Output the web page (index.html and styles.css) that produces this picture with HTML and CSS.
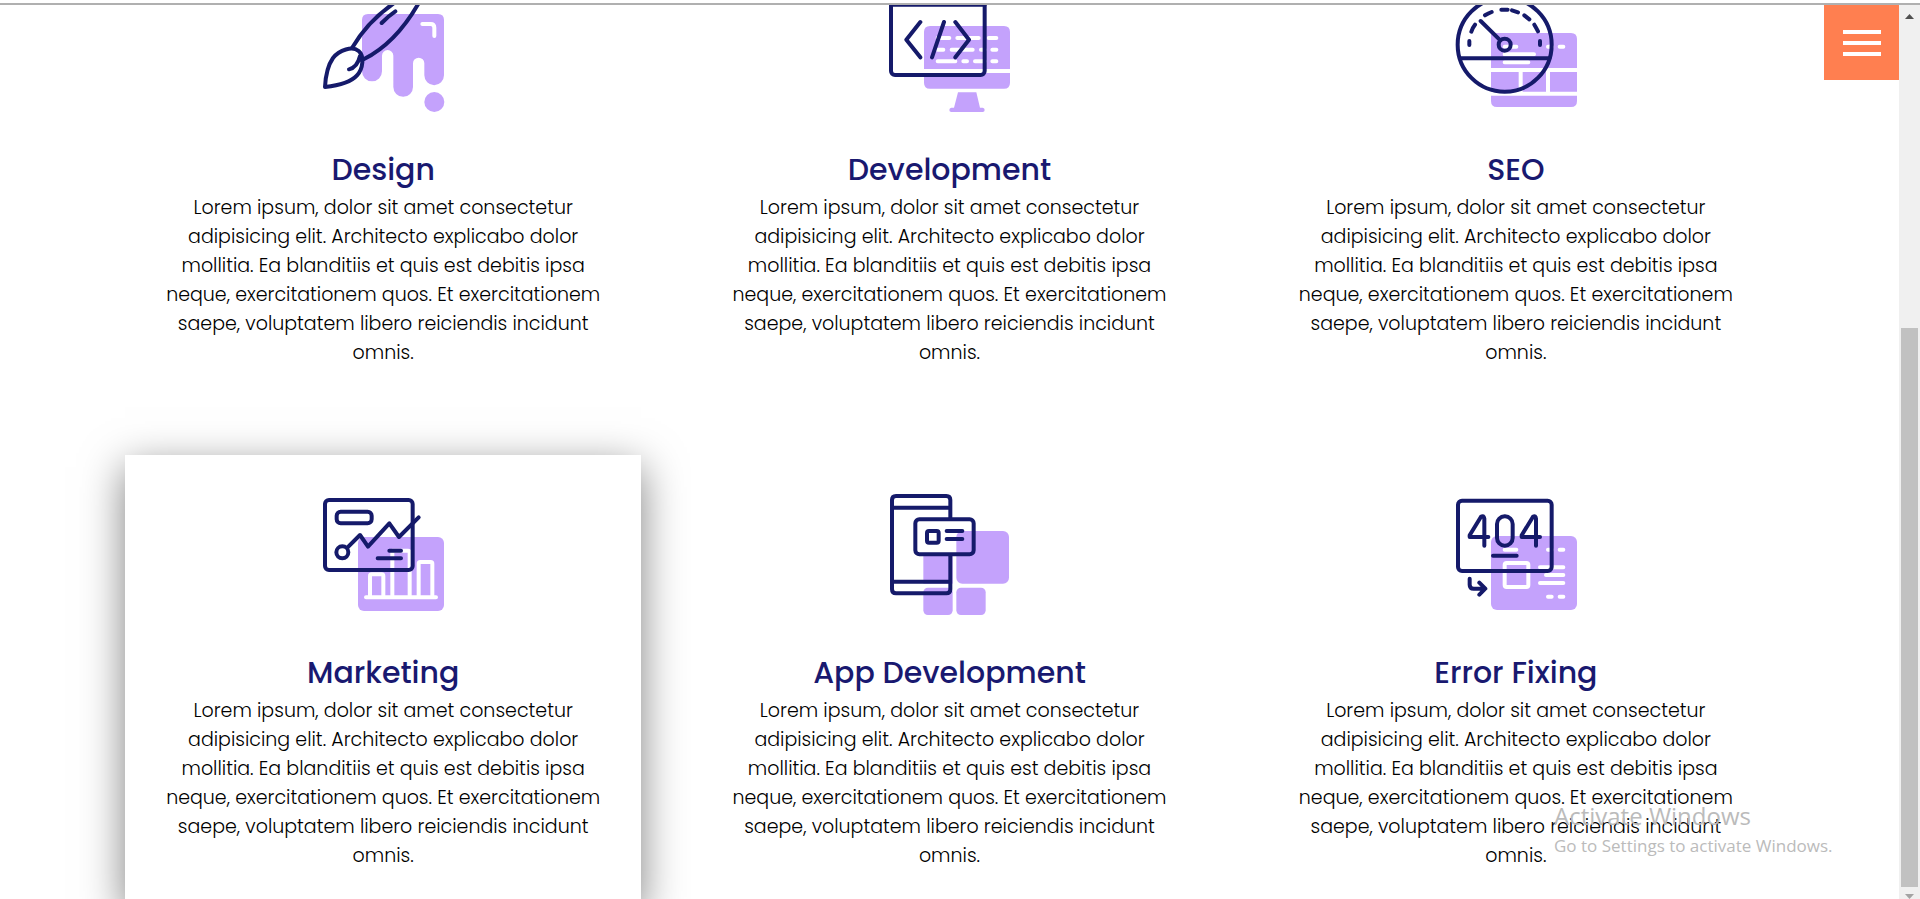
FILE: index.html
```html
<!DOCTYPE html>
<html lang="en">
<head>
<meta charset="utf-8">
<title>Services</title>
<link rel="stylesheet" href="styles.css">
</head>
<body>
<div class="window">
  <div class="page">
    <main class="services">
      <article class="card">
        <svg class="icon" viewBox="54 -39 390 390" aria-hidden="true">
          <path class="fill" d="M204 42H414Q432 42 432 60V226A29 29 0 0 1 373 226V190A17 17 0 0 0 339 190V261A29 29 0 0 1 280 261V167A17 17 0 0 0 246 167V214A30 30 0 0 1 186 214V60Q186 42 204 42Z"/>
          <circle class="fill" cx="403" cy="306" r="30"/>
          <path class="white" d="M367 72H392Q403 72 403 83V108"/>
          <path class="line" d="M156 144Q205 60 290 4M359 4Q290 128 191 178M245 69Q265 48 286 34"/>
          <path class="line" d="M75 261Q78 204 99 174C118 150 157 137 176 153C193 167 190 205 171 226C153 246 119 256 75 261ZM147 208Q172 202 180 168"/>
        </svg>
        <h2 class="title">Design</h2>
        <p class="text">Lorem ipsum, dolor sit amet consectetur adipisicing elit. Architecto explicabo dolor mollitia. Ea blanditiis et quis est debitis ipsa neque, exercitationem quos. Et exercitationem saepe, voluptatem libero reiciendis incidunt omnis.</p>
      </article>
      <article class="card">
        <svg class="icon" viewBox="42 -39 390 390" aria-hidden="true">
          <path class="fill" d="M180 78H402Q420 78 420 96V207H162V96Q162 78 180 78ZM162 219H420V248Q420 266 402 266H180Q162 266 162 248ZM264 277H319L330 323H338Q344 324 344 330Q344 336 338 336H244Q238 336 238 330Q238 324 244 323H252Z"/>
          <path class="white" d="M203 114H238M262 114H326M356 114H379M203 149H220M245 149H308M333 149H344M367 149H379M203 184H256M280 184H291M315 184H344M367 184H379"/>
          <rect class="line" x="63" y="-10" width="281" height="235" rx="12"/>
          <path class="line" d="M63 14H344M151 66L109 119L151 172M222 66L186 172M256 66L297 119L256 172"/>
        </svg>
        <h2 class="title">Development</h2>
        <p class="text">Lorem ipsum, dolor sit amet consectetur adipisicing elit. Architecto explicabo dolor mollitia. Ea blanditiis et quis est debitis ipsa neque, exercitationem quos. Et exercitationem saepe, voluptatem libero reiciendis incidunt omnis.</p>
      </article>
      <article class="card">
        <svg class="icon" viewBox="30 -39 390 390" aria-hidden="true">
          <path class="fill" d="M150 99H390Q408 99 408 117V204H150ZM150 216H233V275H150ZM245 216H315V275H245ZM327 216H408V275H327ZM150 287H408V303Q408 321 390 321H168Q150 321 150 303Z"/>
          <path class="white" d="M191 140H226M321 140H332M356 140H367M191 163H279M191 187H262"/>
          <circle class="line" cx="191" cy="134" r="141"/>
          <path class="line" d="M57 175H325M119 63L178 121M85 135V123M91 95Q94 84 102 74M132 46Q142 40 152 36M181 29H200M213 31L231 37M250 46L265 58M280 74Q286 84 291 94M297 123V135"/>
          <circle class="line" cx="191" cy="134" r="18"/>
        </svg>
        <h2 class="title">SEO</h2>
        <p class="text">Lorem ipsum, dolor sit amet consectetur adipisicing elit. Architecto explicabo dolor mollitia. Ea blanditiis et quis est debitis ipsa neque, exercitationem quos. Et exercitationem saepe, voluptatem libero reiciendis incidunt omnis.</p>
      </article>
      <article class="card raised">
        <svg class="icon" viewBox="54 30 390 390" aria-hidden="true">
          <rect class="fill" x="174" y="171" width="258" height="222" rx="18"/>
          <path class="white" d="M198 352H408M210 352V288Q210 283 215 283H245Q250 283 250 288V352M277 352V212H324Q329 212 329 217V352M356 352V251Q356 246 361 246H392Q397 246 397 251V352"/>
          <rect class="line" x="75" y="60" width="263" height="210" rx="12"/>
          <rect class="line" x="110" y="95" width="105" height="35" rx="12"/>
          <circle class="line" cx="127" cy="217" r="18"/>
          <path class="line" d="M142 203L180 165L204 200L268 130L297 171L356 112M268 212H303M233 235H303"/>
        </svg>
        <h2 class="title">Marketing</h2>
        <p class="text">Lorem ipsum, dolor sit amet consectetur adipisicing elit. Architecto explicabo dolor mollitia. Ea blanditiis et quis est debitis ipsa neque, exercitationem quos. Et exercitationem saepe, voluptatem libero reiciendis incidunt omnis.</p>
      </article>
      <article class="card">
        <svg class="icon" viewBox="42 30 390 390" aria-hidden="true">
          <path class="fill" d="M160 228H248V311H160Z"/>
          <rect class="fill" x="259" y="153" width="158" height="158" rx="18"/>
          <rect class="fill" x="160" y="323" width="88" height="82" rx="14"/>
          <rect class="fill" x="259" y="323" width="88" height="82" rx="14"/>
          <path class="line" d="M241 116V60Q241 48 229 48H78Q66 48 66 60V328Q66 340 78 340H229Q241 340 241 328V226M66 83H241M66 305H241"/>
          <rect class="line" x="136" y="118" width="175" height="105" rx="12"/>
          <rect class="line" x="171" y="153" width="35" height="35" rx="6"/>
          <path class="line" d="M230 153H277M230 177H277"/>
        </svg>
        <h2 class="title">App Development</h2>
        <p class="text">Lorem ipsum, dolor sit amet consectetur adipisicing elit. Architecto explicabo dolor mollitia. Ea blanditiis et quis est debitis ipsa neque, exercitationem quos. Et exercitationem saepe, voluptatem libero reiciendis incidunt omnis.</p>
      </article>
      <article class="card">
        <svg class="icon" viewBox="30 30 390 390" aria-hidden="true">
          <rect class="fill" x="150" y="168" width="258" height="222" rx="18"/>
          <rect class="white" x="191" y="249" width="71" height="72" rx="6"/>
          <path class="white" d="M191 209H226M321 209H332M356 209H367M297 262H367M315 285H367M297 309H367M321 350H332M356 350H367"/>
          <rect class="line" x="51" y="62" width="281" height="211" rx="12"/>
          <path class="line" d="M130 197V116Q128 105 120 110L86 166V171H142M285 197V116Q284 105 276 110L242 166V171H297M156 227H227M86 296V314Q86 326 98 326H132M115 308L133 326L115 344"/>
          <rect class="line" x="168" y="109" width="47" height="88" rx="23"/>
        </svg>
        <h2 class="title">Error Fixing</h2>
        <p class="text">Lorem ipsum, dolor sit amet consectetur adipisicing elit. Architecto explicabo dolor mollitia. Ea blanditiis et quis est debitis ipsa neque, exercitationem quos. Et exercitationem saepe, voluptatem libero reiciendis incidunt omnis.</p>
      </article>
    </main>
    <button class="menu" type="button" aria-label="Open menu"><span class="bar"></span><span class="bar"></span><span class="bar"></span></button>
    <aside class="notice">
      <p class="notice-title">Activate Windows</p>
      <p class="notice-text">Go to Settings to activate Windows.</p>
    </aside>
  </div>
  <div class="scrollbar" aria-hidden="true">
    <span class="arrow up"></span>
    <span class="thumb"></span>
    <span class="arrow down"></span>
  </div>
</div>
</body>
</html>
```
FILE: styles.css
```css
* { box-sizing: border-box; margin: 0; }

body {
  padding-top: 3px;
  background: #fff;
  color: #000;
  font-family: Poppins, Inter, "Liberation Sans", sans-serif;
}

.window {
  display: flex;
  height: calc(100vh - 3px);
  border-top: 2px solid #b0b0b0;
  overflow: hidden;
}

.page {
  position: relative;
  flex: 1;
  overflow: hidden;
}

.services {
  display: grid;
  grid-template-columns: repeat(3, 1fr);
  gap: 53px 50px;
  margin: -53px 125px 0;
}

.card {
  display: flex;
  flex-direction: column;
  align-items: center;
  padding: 35px 40px;
  background: #fff;
  text-align: center;
}

.raised { box-shadow: 0 12px 40px rgba(0, 0, 0, 0.5); }

.icon {
  width: 130px;
  height: 130px;
  margin-bottom: 30px;
}

.fill { fill: #c4a2fc; }
.line, .white {
  fill: none;
  stroke: #151a6a;
  stroke-width: 12;
  stroke-linecap: round;
  stroke-linejoin: round;
}
.white { stroke: #fff; }

.title {
  margin-bottom: 1px;
  color: #191970;
  font-size: 30px;
  font-weight: 500;
  line-height: 45px;
}

.text {
  font-size: 19px;
  font-weight: 300;
  line-height: 29px;
}

.menu {
  position: absolute;
  top: 0;
  right: 0;
  display: flex;
  flex-direction: column;
  align-items: center;
  justify-content: center;
  gap: 7px;
  width: 75px;
  height: 75px;
  padding: 0;
  border: 0;
  background: #ff7f50;
}

.bar {
  width: 38px;
  height: 4px;
  background: #fff;
}

.notice {
  position: absolute;
  right: 60px;
  bottom: 39px;
  width: 285px;
  color: #bbb;
  font-family: "Segoe UI", "Open Sans", sans-serif;
  white-space: nowrap;
}

.notice-title { font-size: 24px; line-height: 32px; }
.notice-text { font-size: 17px; line-height: 28px; }

.scrollbar {
  display: flex;
  flex-direction: column;
  align-items: center;
  width: 21px;
  background: #f0f0f0;
}

.arrow {
  width: 9px;
  height: 5px;
  background: #505050;
  clip-path: polygon(50% 0, 100% 100%, 0 100%);
}
.up { margin-top: 9px; }
.down {
  margin-top: 7px;
  background: #a3a3a3;
  clip-path: polygon(0 0, 100% 0, 50% 100%);
}

.thumb {
  width: 17px;
  height: 62.5%;
  margin-top: auto;
  background: #c1c1c1;
}
```
